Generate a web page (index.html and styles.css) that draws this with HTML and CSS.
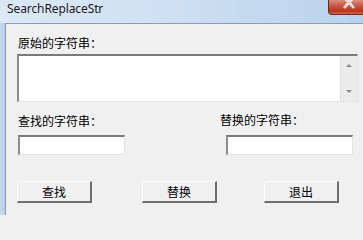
FILE: index.html
```html
<!DOCTYPE html>
<html lang="zh-CN">
<head>
<meta charset="utf-8">
<title>SearchReplaceStr</title>
<link rel="stylesheet" href="styles.css">
</head>
<body>
<div class="window">
  <div class="titlebar">
    <span class="title">SearchReplaceStr</span>
    <div class="close">
      <svg width="36" height="15" viewBox="0 0 36 15"><path d="M16 -2 L26 9 M26 -2 L16 9" stroke="#fff" stroke-width="2.6" fill="none"/><path d="M16 -2 L26 9 M26 -2 L16 9" stroke="#6b2a22" stroke-width="0.6" fill="none" opacity="0.5"/></svg>
    </div>
  </div>
  <div class="body">
    <div class="frame-left"></div>
    <div class="content">
      <div class="label first">原始的字符串：</div>
      <div class="memo">
        <div class="memo-text"></div>
        <div class="scrollbar">
          <span class="arrow up"></span>
          <span class="arrow down"></span>
        </div>
      </div>
      <div class="fields">
        <div class="field left">
          <div class="label">查找的字符串：</div>
          <div class="edit find"></div>
        </div>
        <div class="field right">
          <div class="label">替换的字符串：</div>
          <div class="edit repl"></div>
        </div>
      </div>
      <div class="buttons">
        <div class="btn b1">查找</div>
        <div class="btn b2">替换</div>
        <div class="btn b3">退出</div>
      </div>
    </div>
  </div>
</div>
</body>
</html>
```
FILE: styles.css
```css
* { box-sizing: border-box; }
html { background: #f0f0f0; }
html, body { margin: 0; padding: 0; }
body {
  width: 363px;
  height: 215px;
  overflow: hidden;
  background: #c9dcf0;
  font-family: "Noto Sans CJK SC", "Noto Sans", sans-serif;
}
.window {
  width: 363px;
  height: 215px;
  display: flex;
  flex-direction: column;
}
.titlebar {
  height: 23px;
  flex: none;
  display: flex;
  align-items: flex-start;
  justify-content: space-between;
  background: linear-gradient(to right, #dce8f5 0%, #cfe0f2 45%, #b9d2ec 100%);
}
.title {
  font-family: "Noto Sans", "Open Sans", sans-serif;
  font-size: 12px;
  line-height: 14px;
  padding-top: 2px;
  padding-left: 7px;
  color: #1b1b1b;
  letter-spacing: -0.1px;
}
.close {
  width: 36px;
  height: 15px;
  margin-right: -1px;
  border: 1px solid #6e2a20;
  border-top: none;
  border-bottom-left-radius: 4px;
  background: linear-gradient(to bottom, #d98d7c 0%, #c9513f 45%, #b5361f 80%, #cf6a4e 100%);
  overflow: hidden;
}
.close svg { display: block; margin-top: -1px; margin-left: -1px; }
.body {
  flex: 1;
  display: flex;
}
.frame-left {
  width: 5px;
  flex: none;
  background: linear-gradient(to right, #c6daf0, #b8cfe8);
}
.content {
  flex: 1;
  background: #f0f0f0;
  border-top: 1px solid #8a9db4;
  border-left: 1px solid #8a9db4;
  padding-left: 11px;
  display: flex;
  flex-direction: column;
}
.label {
  font-size: 12px;
  line-height: 14px;
  color: #000;
  white-space: nowrap;
}
.label.first {
  margin-top: 12px;
  margin-left: 1px;
}
.memo {
  margin-top: 4px;
  width: 341px;
  height: 48px;
  display: flex;
  border-top: 2px solid #7a7a7a;
  border-left: 2px solid #8d8d8d;
  border-right: 1px solid #e4e4e4;
  border-bottom: 1px solid #e4e4e4;
  background: #fff;
}
.memo-text { flex: 1; }
.scrollbar {
  width: 17px;
  flex: none;
  background: #ececec;
  border-left: 1px solid #e0e0e0;
  display: flex;
  flex-direction: column;
  justify-content: space-between;
  align-items: center;
  padding: 8px 0 8px;
}
.arrow {
  width: 0;
  height: 0;
  border-left: 3px solid transparent;
  border-right: 3px solid transparent;
}
.arrow.up { border-bottom: 3px solid #8c8c8c; }
.arrow.down { border-top: 3px solid #8c8c8c; }
.fields {
  display: flex;
  margin-top: 12px;
}
.field { display: flex; flex-direction: column; }
.field.left { width: 202px; margin-left: 1px; }
.edit {
  height: 20px;
  background: #fff;
  border-top: 2px solid #7a7a7a;
  border-left: 2px solid #8d8d8d;
  border-right: 1px solid #e4e4e4;
  border-bottom: 1px solid #e4e4e4;
}
.edit.find { width: 107px; margin-top: 7px; }
.field.right .label { margin-top: -1px; }
.edit.repl { width: 127px; margin-left: 6px; margin-top: 8px; }
.buttons {
  display: flex;
  margin-top: 26px;
}
.btn {
  width: 75px;
  height: 22px;
  font-size: 12px;
  line-height: 19px;
  text-align: center;
  color: #000;
  background: #f0f0f0;
  border-top: 1px solid #fdfdfd;
  border-left: 1px solid #fdfdfd;
  border-right: 2px solid #6e6e6e;
  border-bottom: 2px solid #6e6e6e;
}
.b2 { margin-left: 50px; }
.b3 { margin-left: 47px; }
```
